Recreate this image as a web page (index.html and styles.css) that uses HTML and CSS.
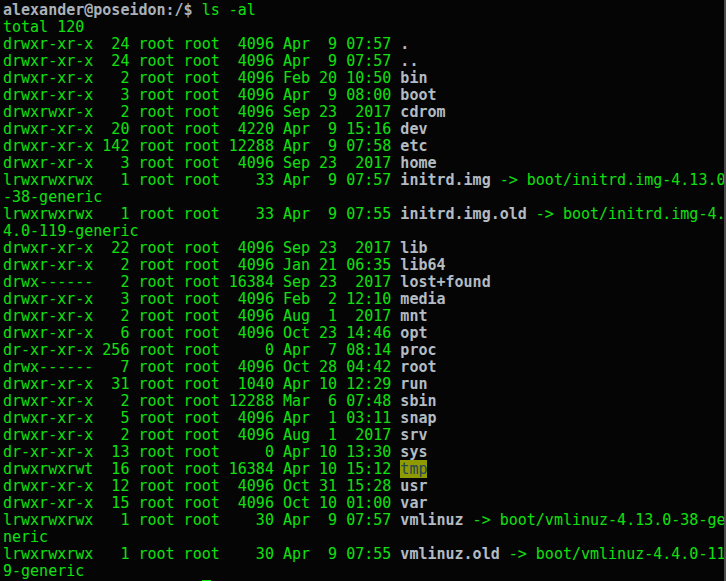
FILE: index.html
```html
<!DOCTYPE html>
<html>
<head>
<meta charset="utf-8">
<link rel="stylesheet" href="styles.css">
</head>
<body>
<div class="term"><pre class="out"><span class="p">alexander@poseidon:/$</span> ls -al
total 120
drwxr-xr-x  24 root root  4096 Apr  9 07:57 <span class="n">.</span>
drwxr-xr-x  24 root root  4096 Apr  9 07:57 <span class="n">..</span>
drwxr-xr-x   2 root root  4096 Feb 20 10:50 <span class="n">bin</span>
drwxr-xr-x   3 root root  4096 Apr  9 08:00 <span class="n">boot</span>
drwxrwxr-x   2 root root  4096 Sep 23  2017 <span class="n">cdrom</span>
drwxr-xr-x  20 root root  4220 Apr  9 15:16 <span class="n">dev</span>
drwxr-xr-x 142 root root 12288 Apr  9 07:58 <span class="n">etc</span>
drwxr-xr-x   3 root root  4096 Sep 23  2017 <span class="n">home</span>
lrwxrwxrwx   1 root root    33 Apr  9 07:57 <span class="n">initrd.img</span> -> boot/initrd.img-4.13.0
-38-generic
lrwxrwxrwx   1 root root    33 Apr  9 07:55 <span class="n">initrd.img.old</span> -> boot/initrd.img-4.
4.0-119-generic
drwxr-xr-x  22 root root  4096 Sep 23  2017 <span class="n">lib</span>
drwxr-xr-x   2 root root  4096 Jan 21 06:35 <span class="n">lib64</span>
drwx------   2 root root 16384 Sep 23  2017 <span class="n">lost+found</span>
drwxr-xr-x   3 root root  4096 Feb  2 12:10 <span class="n">media</span>
drwxr-xr-x   2 root root  4096 Aug  1  2017 <span class="n">mnt</span>
drwxr-xr-x   6 root root  4096 Oct 23 14:46 <span class="n">opt</span>
dr-xr-xr-x 256 root root     0 Apr  7 08:14 <span class="n">proc</span>
drwx------   7 root root  4096 Oct 28 04:42 <span class="n">root</span>
drwxr-xr-x  31 root root  1040 Apr 10 12:29 <span class="n">run</span>
drwxr-xr-x   2 root root 12288 Mar  6 07:48 <span class="n">sbin</span>
drwxr-xr-x   5 root root  4096 Apr  1 03:11 <span class="n">snap</span>
drwxr-xr-x   2 root root  4096 Aug  1  2017 <span class="n">srv</span>
dr-xr-xr-x  13 root root     0 Apr 10 13:30 <span class="n">sys</span>
drwxrwxrwt  16 root root 16384 Apr 10 15:12 <span class="hl">tmp</span>
drwxr-xr-x  12 root root  4096 Oct 31 15:28 <span class="n">usr</span>
drwxr-xr-x  15 root root  4096 Oct 10 01:00 <span class="n">var</span>
lrwxrwxrwx   1 root root    30 Apr  9 07:57 <span class="n">vmlinuz</span> -> boot/vmlinuz-4.13.0-38-ge
neric
lrwxrwxrwx   1 root root    30 Apr  9 07:55 <span class="n">vmlinuz.old</span> -> boot/vmlinuz-4.4.0-11
9-generic
                      <span class="cursor"></span></pre></div>
</body>
</html>
```

FILE: styles.css
```css
html, body {
  margin: 0;
  padding: 0;
  background: #050505;
}
body {
  width: 726px;
  height: 581px;
  overflow: hidden;
}
.term {
  height: 581px;
  width: 724px;
  border-right: 2px solid #4a4a4a;
  overflow: hidden;
  background: #050505;
}
.out {
  margin: 0;
  padding: 2px 0 0 3px;
  font-family: "DejaVu Sans Mono", monospace;
  font-size: 15px;
  line-height: 17px;
  color: #10e010;
  white-space: pre;
}
.p {
  color: #a9b1b9;
  font-weight: bold;
}
.n {
  color: #b3bbc3;
  font-weight: bold;
}
.hl {
  background: #8f9a00;
  color: #25455a;
}
.cursor {
  display: inline-block;
  width: 9px;
  height: 3px;
  background: #10e010;
  vertical-align: top;
}
```
